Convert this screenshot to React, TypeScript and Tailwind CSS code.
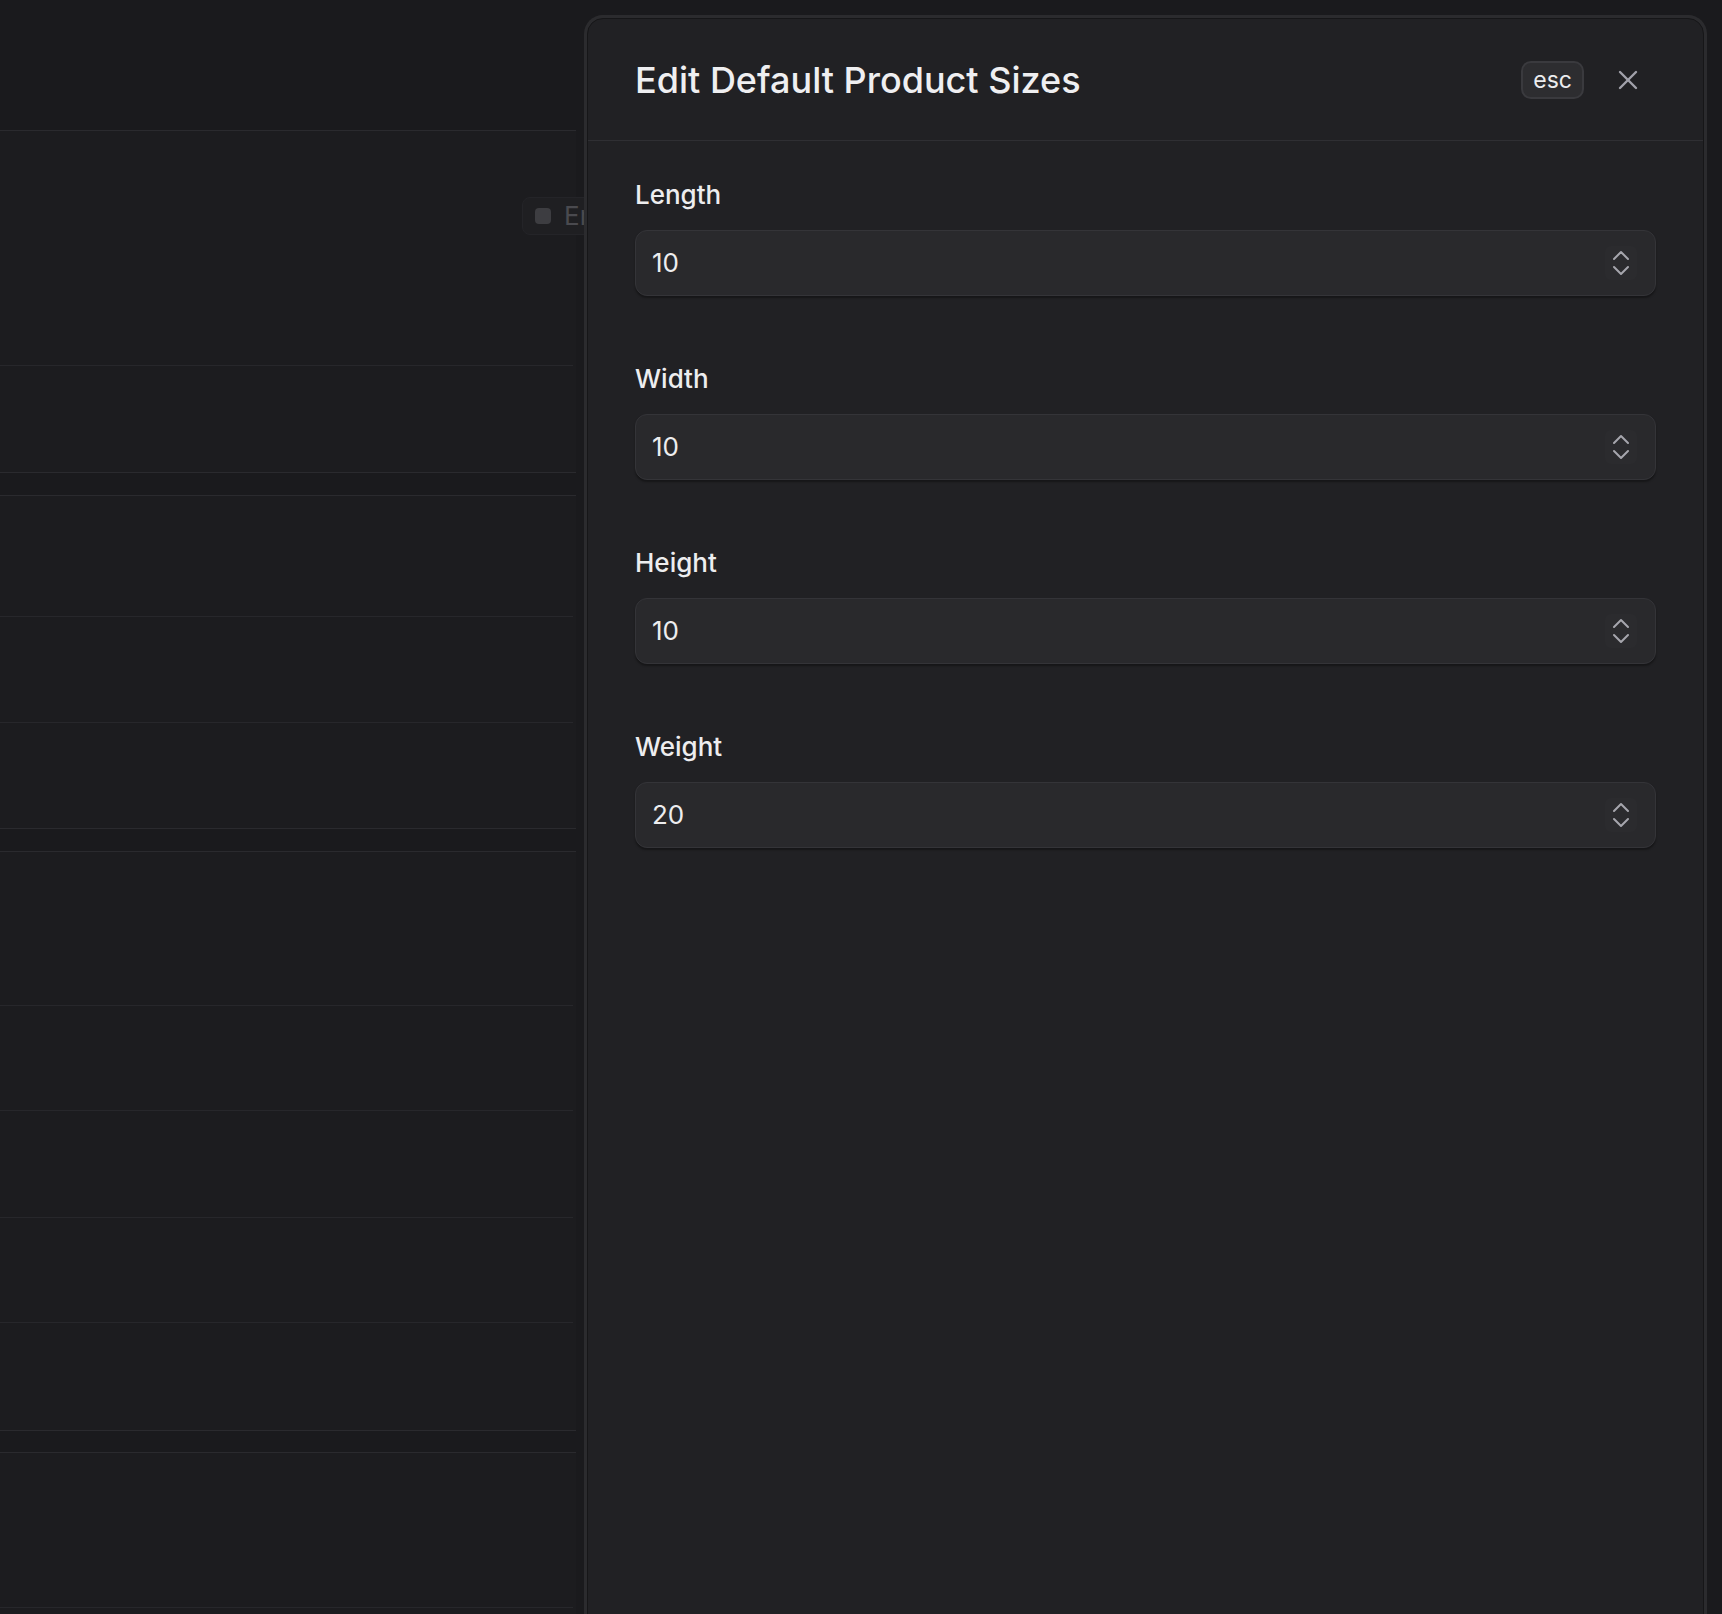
import React from "react";

const fields = [
  { label: "Length", value: "10" },
  { label: "Width", value: "10" },
  { label: "Height", value: "10" },
  { label: "Weight", value: "20" },
];

function Stepper() {
  return (
    <div className="flex h-[34px] w-[32px] items-center justify-center rounded-[6px] bg-[#2b2b2e]">
      <svg width="16" height="26" viewBox="0 0 16 26" fill="none">
        <polyline points="1,9 8,2 15,9" stroke="#a6a6ad" strokeWidth="2" strokeLinecap="round" strokeLinejoin="round" />
        <polyline points="1,17 8,24 15,17" stroke="#a6a6ad" strokeWidth="2" strokeLinecap="round" strokeLinejoin="round" />
      </svg>
    </div>
  );
}

function Field({ label, value }: { label: string; value: string }) {
  return (
    <div className="flex flex-col">
      <label className="h-[40px] text-[26px] leading-[40px] font-medium text-[#ededef]">{label}</label>
      <div className="mt-[15px] flex h-[66px] items-center justify-between rounded-[12px] border border-[#343438] bg-[#29292c] pl-[16px] pr-[18px] shadow-[0_2px_2px_rgba(0,0,0,0.35)]">
        <span className="text-[26px] leading-[40px] text-[#ededef]">{value}</span>
        <Stepper />
      </div>
    </div>
  );
}

function Card({ rows, first, top }: { rows: number[]; first?: React.ReactNode; top?: boolean }) {
  return (
    <div
      className={
        top
          ? "flex w-[576px] flex-col border-y border-[#2a2a2e] bg-[#1c1c1f]"
          : "flex w-[576px] flex-col border-b border-[#2a2a2e] bg-[#1c1c1f]"
      }
    >
      {rows.map((h, i) => (
        <div
          key={i}
          className={i < rows.length - 1 ? "mr-[3px] flex border-b border-[#27272b]" : "flex"}
          style={{ height: h }}
        >
          {i === 0 ? first : null}
        </div>
      ))}
    </div>
  );
}

export default function App() {
  return (
    <div
      className="relative h-[1614px] w-[1722px] overflow-hidden bg-[#1a1a1d]"
      style={{ fontFamily: "Inter, 'Noto Sans', sans-serif" }}
    >
      {/* dimmed page behind */}
      <div className="flex w-[584px] flex-col overflow-hidden">
        <div className="h-[131px] w-[576px] border-b border-[#2a2a2e]" />
        <Card
          rows={[235, 106]}
          first={
            <div className="ml-[522px] mt-[66px] flex h-[38px] items-center gap-[13px] whitespace-nowrap rounded-[8px] border border-[#242428] bg-[#1f1f22] pl-[12px] pr-[12px]">
              <span className="h-[16px] w-[16px] shrink-0 rounded-[4px] bg-[#3d3d41]" />
              <span className="text-[26px] leading-[30px] text-[#4a4a4f]">En</span>
            </div>
          }
        />
        <div className="h-[22px]" />
        <Card top rows={[121, 106, 105]} />
        <div className="h-[22px]" />
        <Card top rows={[154, 105, 107, 105, 107]} />
        <div className="h-[21px]" />
        <Card top rows={[155, 200]} />
      </div>

      {/* drawer */}
      <div className="absolute top-[18px] right-[18px] bottom-[-40px] flex w-[1117px] flex-col rounded-[16px] border border-[#161618] bg-[#212124] shadow-[0_0_0_3px_rgba(255,255,255,0.08)]">
        <div className="flex h-[122px] shrink-0 items-center justify-between border-b border-[#2f2f33] px-[47px]">
          <h1 className="text-[36px] leading-[48px] font-medium text-[#efeff1]">Edit Default Product Sizes</h1>
          <div className="flex items-center gap-[16px]">
            <span className="flex h-[38px] items-center rounded-[10px] border-2 border-[#3a3a3e] bg-[#2d2d30] px-[10px] text-[23px] leading-[28px] text-[#ececee]">
              esc
            </span>
            <button className="flex h-[56px] w-[56px] items-center justify-center rounded-[12px]">
              <svg width="20" height="20" viewBox="0 0 20 20" fill="none">
                <line x1="2" y1="2" x2="18" y2="18" stroke="#a1a1aa" strokeWidth="2.4" strokeLinecap="round" />
                <line x1="18" y1="2" x2="2" y2="18" stroke="#a1a1aa" strokeWidth="2.4" strokeLinecap="round" />
              </svg>
            </button>
          </div>
        </div>
        <div className="flex flex-col gap-[63px] px-[47px] pt-[34px]">
          {fields.map((f) => (
            <Field key={f.label} label={f.label} value={f.value} />
          ))}
        </div>
      </div>
    </div>
  );
}
